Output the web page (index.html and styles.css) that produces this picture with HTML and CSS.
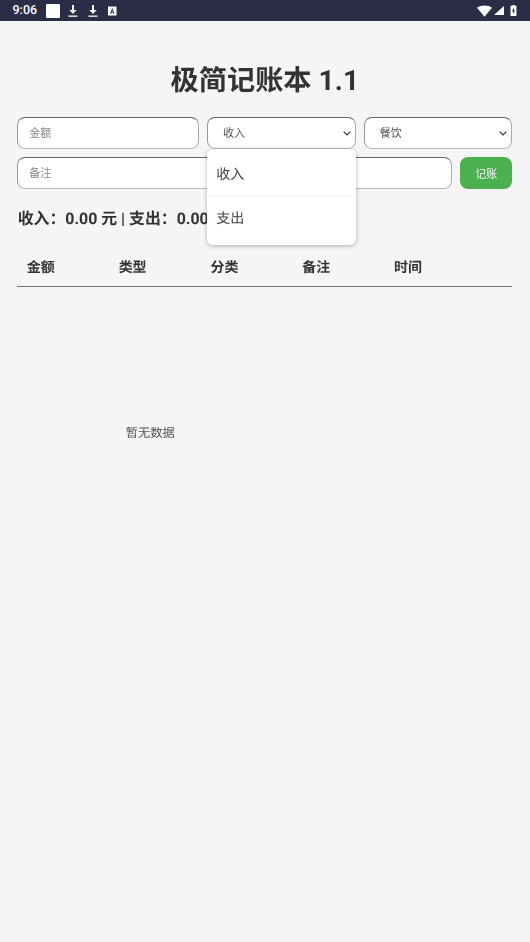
FILE: index.html
```html
<!DOCTYPE html>
<html lang="zh-CN">
<head>
<meta charset="utf-8">
<title>极简记账本</title>
<link rel="stylesheet" href="styles.css">
</head>
<body>
<header class="statusbar">
  <div class="status-left">
    <span class="clock">9:06</span>
    <span class="note-square"></span>
    <svg class="sicon wide" viewBox="0 0 12 14" width="12" height="14"><path d="M5 1h2v5h2.600L6 10 2.400 6H5z" fill="#fff"/><rect x="1.500" y="11.500" width="9" height="1.300" fill="#fff"/></svg>
    <svg class="sicon" viewBox="0 0 12 14" width="12" height="14"><path d="M5 1h2v5h2.600L6 10 2.400 6H5z" fill="#fff"/><rect x="1.500" y="11.500" width="9" height="1.300" fill="#fff"/></svg>
    <svg class="sicon" viewBox="0 0 12 14" width="12" height="14"><path fill-rule="evenodd" d="M2 2.500h8.500v9H2zM6.250 4 4 9.800h1.200l.4-1.200h1.300l.4 1.200h1.200L6.250 4zm0 2.300.4 1.400h-.8z" fill="#fff"/></svg>
  </div>
  <div class="status-right">
    <svg class="wifi" viewBox="0 0 16 12" width="15" height="12"><path d="M0 2.500C4.500-.8 11.500-.8 16 2.500L8 12z" fill="#fff"/></svg>
    <svg class="signal" viewBox="0 0 11 12" width="10" height="11"><path d="M11 1v10H0z" fill="#fff"/></svg>
    <svg viewBox="0 0 8 13" width="7" height="11"><path fill-rule="evenodd" d="M2.500 0h3v1H7.500v12H.5V1h2zM4.600 3 2.200 7.500h1.500V11l2.200-4.500H4.500z" fill="#fff"/></svg>
  </div>
</header>

<main class="page">
  <h1 class="title">极简记账本 1.1</h1>

  <div class="form-row first">
    <input class="field" type="text" placeholder="金额">
    <div class="select-wrap">
      <select class="field pick"><option>收入</option><option>支出</option></select>
      <ul class="menu">
        <li class="menu-item">收入</li>
        <li class="menu-item">支出</li>
      </ul>
    </div>
    <select class="field pick"><option>餐饮</option></select>
  </div>

  <div class="form-row second">
    <input class="field" type="text" placeholder="备注">
    <button class="submit" type="button">记账</button>
  </div>

  <p class="summary">收入：0.00 元 | 支出：0.00 元</p>

  <div class="table-head">
    <span class="col">金额</span>
    <span class="col">类型</span>
    <span class="col">分类</span>
    <span class="col">备注</span>
    <span class="col">时间</span>
  </div>
  <p class="empty">暂无数据</p>
</main>
</body>
</html>
```
FILE: styles.css
```css
* { box-sizing: border-box; }
html, body { margin: 0; padding: 0; }
body {
  width: 530px;
  height: 942px;
  overflow: hidden;
  background: #f5f5f5;
  color: #333;
  font-family: Roboto, "Noto Sans CJK SC", sans-serif;
  text-rendering: geometricPrecision;
}
.statusbar {
  height: 21px;
  background: #2b2d47;
  color: #fff;
  display: flex;
  justify-content: space-between;
  align-items: center;
  padding: 0 13px 0 12.500px;
}
.status-left, .status-right { display: flex; align-items: center; }
.clock { font-size: 12.500px; font-weight: 500; width: 33.500px; }
.note-square { width: 14px; height: 14px; background: #fff; border-radius: 1px; margin-right: 7px; }
.sicon { margin-right: 7px; }
.sicon.wide { margin-right: 8px; }
.wifi { margin-right: 2px; }
.signal { margin-right: 6px; }
.page { padding: 0 17.670px 0 17.330px; will-change: opacity; }
.title {
  margin: 0;
  padding-top: 41px;
  height: 96px;
  text-align: center;
  font-size: 28.200px;
  line-height: 37px;
  font-weight: 700;
  color: #333;
}
.form-row { display: grid; column-gap: 8.300px; height: 32px; }
.form-row.first { grid-template-columns: 182fr 149fr 149fr; margin-bottom: 8px; }
.form-row.second { grid-template-columns: 1fr 52px; column-gap: 8.600px; }
.field {
  width: 100%;
  height: 32px;
  margin: 0;
  padding: 0 11px;
  border: 1px solid;
  border-color: #666 #aaa #bbb #999;
  border-radius: 8px;
  background-color: #fff;
  color: #555;
  font-family: inherit;
  font-size: 11px;
}
.field::placeholder { color: #888; }
.pick {
  appearance: none;
  padding: 0 2px 0 15px;
  background-image: url("data:image/svg+xml,%3Csvg xmlns='http://www.w3.org/2000/svg' width='8' height='5'%3E%3Cpath d='M.7.7 4 4l3.300-3.300' fill='none' stroke='%23333' stroke-width='1.200'/%3E%3C/svg%3E");
  background-repeat: no-repeat;
  background-position: right 4px center;
  background-size: 8px 5px;
}
.select-wrap { position: relative; }
.menu {
  position: absolute;
  z-index: 2;
  top: 32px;
  left: 0;
  width: 100%;
  height: 96px;
  margin: 0;
  padding: 0;
  list-style: none;
  background: #fff;
  border-radius: 6px;
  box-shadow: 0 1px 4px rgba(0, 0, 0, .3);
}
.menu-item {
  padding: 0 9.300px;
  font-size: 14px;
  color: #444;
}
.menu-item:first-child { height: 48px; line-height: 52px; border-bottom: 1px solid #f4f4f4; }
.menu-item:last-child { height: 46px; line-height: 44px; }
.submit {
  height: 32px;
  padding: 0;
  border: 0;
  border-radius: 8px;
  background: #4caf50;
  color: #f4f4f4;
  font-family: inherit;
  font-size: 11px;
}
.summary {
  margin: 19px 0 0 .3px;
  font-size: 15.900px;
  line-height: 22px;
  font-weight: 700;
  color: #333;
}
.table-head {
  display: flex;
  margin-top: 19px;
  height: 38px;
  padding-top: 9px;
  border-bottom: 1px solid #777;
}
.col {
  width: 91.800px;
  padding-left: 9.500px;
  font-size: 14px;
  line-height: 20px;
  font-weight: 700;
  color: #333;
}
.empty {
  width: 266px;
  margin: 138px 0 0;
  text-align: center;
  font-size: 12.300px;
  line-height: 18px;
  color: #555;
}
```
